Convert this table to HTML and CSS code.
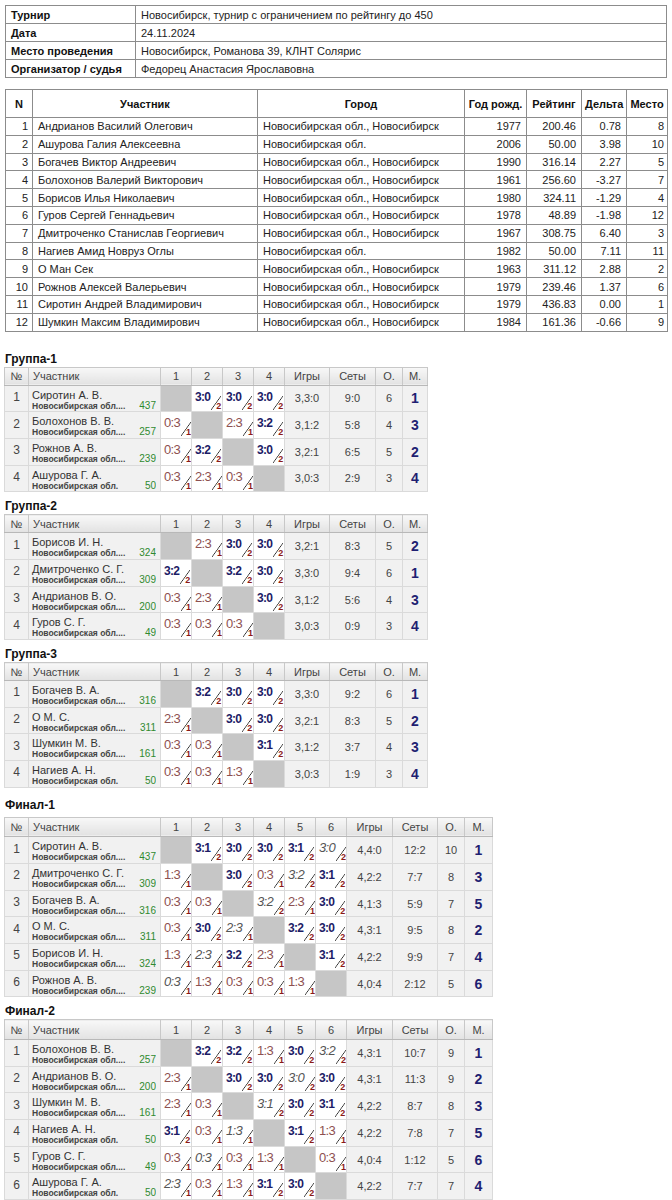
FILE: index.html
```html
<!DOCTYPE html>
<html lang="ru">
<head>
<meta charset="utf-8">
<title>Турнир</title>
<link rel="stylesheet" href="styles.css">
</head>
<body>
<table class="info">
  <colgroup><col class="i-lab"><col></colgroup>
  <tr><td class="lab">Турнир</td><td>Новосибирск, турнир с ограничением по рейтингу до 450</td></tr>
  <tr><td class="lab">Дата</td><td>24.11.2024</td></tr>
  <tr><td class="lab">Место проведения</td><td>Новосибирск, Романова 39, КЛНТ Солярис</td></tr>
  <tr><td class="lab">Организатор / судья</td><td>Федорец Анастасия Ярославовна</td></tr>
</table>

<table class="list">
  <colgroup><col class="l-n"><col class="l-name"><col class="l-city"><col class="l-year"><col class="l-rt"><col class="l-d"><col class="l-pl"></colgroup>
  <thead>
    <tr><th>N</th><th>Участник</th><th>Город</th><th>Год рожд.</th><th>Рейтинг</th><th>Дельта</th><th>Место</th></tr>
  </thead>
  <tbody>
    <tr><td class="r">1</td><td>Андрианов Василий Олегович</td><td>Новосибирская обл., Новосибирск</td><td class="r">1977</td><td class="r">200.46</td><td class="r">0.78</td><td class="r">8</td></tr>
    <tr><td class="r">2</td><td>Ашурова Галия Алексеевна</td><td>Новосибирская обл.</td><td class="r">2006</td><td class="r">50.00</td><td class="r">3.98</td><td class="r">10</td></tr>
    <tr><td class="r">3</td><td>Богачев Виктор Андреевич</td><td>Новосибирская обл., Новосибирск</td><td class="r">1990</td><td class="r">316.14</td><td class="r">2.27</td><td class="r">5</td></tr>
    <tr><td class="r">4</td><td>Болохонов Валерий Викторович</td><td>Новосибирская обл., Новосибирск</td><td class="r">1961</td><td class="r">256.60</td><td class="r">-3.27</td><td class="r">7</td></tr>
    <tr><td class="r">5</td><td>Борисов Илья Николаевич</td><td>Новосибирская обл., Новосибирск</td><td class="r">1980</td><td class="r">324.11</td><td class="r">-1.29</td><td class="r">4</td></tr>
    <tr><td class="r">6</td><td>Гуров Сергей Геннадьевич</td><td>Новосибирская обл., Новосибирск</td><td class="r">1978</td><td class="r">48.89</td><td class="r">-1.98</td><td class="r">12</td></tr>
    <tr><td class="r">7</td><td>Дмитроченко Станислав Георгиевич</td><td>Новосибирская обл., Новосибирск</td><td class="r">1967</td><td class="r">308.75</td><td class="r">6.40</td><td class="r">3</td></tr>
    <tr><td class="r">8</td><td>Нагиев Амид Новруз Оглы</td><td>Новосибирская обл.</td><td class="r">1982</td><td class="r">50.00</td><td class="r">7.11</td><td class="r">11</td></tr>
    <tr><td class="r">9</td><td>О Ман Сек</td><td>Новосибирская обл., Новосибирск</td><td class="r">1963</td><td class="r">311.12</td><td class="r">2.88</td><td class="r">2</td></tr>
    <tr><td class="r">10</td><td>Рожнов Алексей Валерьевич</td><td>Новосибирская обл., Новосибирск</td><td class="r">1979</td><td class="r">239.46</td><td class="r">1.37</td><td class="r">6</td></tr>
    <tr><td class="r">11</td><td>Сиротин Андрей Владимирович</td><td>Новосибирская обл., Новосибирск</td><td class="r">1979</td><td class="r">436.83</td><td class="r">0.00</td><td class="r">1</td></tr>
    <tr><td class="r">12</td><td>Шумкин Максим Владимирович</td><td>Новосибирская обл., Новосибирск</td><td class="r">1984</td><td class="r">161.36</td><td class="r">-0.66</td><td class="r">9</td></tr>
  </tbody>
</table>

<div class="ttl first">Группа-1</div>
<table class="rr grp">
  <colgroup><col class="w-no"><col class="w-nm"><col class="w-g"><col class="w-g"><col class="w-g"><col class="w-g"><col class="w-gm"><col class="w-st"><col class="w-o"><col class="w-m"></colgroup>
  <thead><tr><th>№</th><th class="hn">Участник</th><th>1</th><th>2</th><th>3</th><th>4</th><th>Игры</th><th>Сеты</th><th>О.</th><th>М.</th></tr></thead>
  <tbody>
    <tr><td class="no">1</td><td class="nm"><div class="n">Сиротин А. В.</div><div class="rg"><span>Новосибирская обл....</span><span class="rt">437</span></div></td>
      <td class="x"></td>
      <td class="g"><div class="sc w"><span class="s">3:0</span><span class="p">2</span></div></td>
      <td class="g"><div class="sc w"><span class="s">3:0</span><span class="p">2</span></div></td>
      <td class="g"><div class="sc w"><span class="s">3:0</span><span class="p">2</span></div></td>
      <td class="st">3,3:0</td><td class="st">9:0</td><td class="st">6</td><td class="m">1</td></tr>
    <tr><td class="no">2</td><td class="nm"><div class="n">Болохонов В. В.</div><div class="rg"><span>Новосибирская обл....</span><span class="rt">257</span></div></td>
      <td class="g"><div class="sc l"><span class="s">0:3</span><span class="p">1</span></div></td>
      <td class="x"></td>
      <td class="g"><div class="sc l"><span class="s">2:3</span><span class="p">1</span></div></td>
      <td class="g"><div class="sc w"><span class="s">3:2</span><span class="p">2</span></div></td>
      <td class="st">3,1:2</td><td class="st">5:8</td><td class="st">4</td><td class="m">3</td></tr>
    <tr><td class="no">3</td><td class="nm"><div class="n">Рожнов А. В.</div><div class="rg"><span>Новосибирская обл....</span><span class="rt">239</span></div></td>
      <td class="g"><div class="sc l"><span class="s">0:3</span><span class="p">1</span></div></td>
      <td class="g"><div class="sc w"><span class="s">3:2</span><span class="p">2</span></div></td>
      <td class="x"></td>
      <td class="g"><div class="sc w"><span class="s">3:0</span><span class="p">2</span></div></td>
      <td class="st">3,2:1</td><td class="st">6:5</td><td class="st">5</td><td class="m">2</td></tr>
    <tr><td class="no">4</td><td class="nm"><div class="n">Ашурова Г. А.</div><div class="rg"><span>Новосибирская обл.</span><span class="rt">50</span></div></td>
      <td class="g"><div class="sc l"><span class="s">0:3</span><span class="p">1</span></div></td>
      <td class="g"><div class="sc l"><span class="s">2:3</span><span class="p">1</span></div></td>
      <td class="g"><div class="sc l"><span class="s">0:3</span><span class="p">1</span></div></td>
      <td class="x"></td>
      <td class="st">3,0:3</td><td class="st">2:9</td><td class="st">3</td><td class="m">4</td></tr>
  </tbody>
</table>

<div class="ttl">Группа-2</div>
<table class="rr grp">
  <colgroup><col class="w-no"><col class="w-nm"><col class="w-g"><col class="w-g"><col class="w-g"><col class="w-g"><col class="w-gm"><col class="w-st"><col class="w-o"><col class="w-m"></colgroup>
  <thead><tr><th>№</th><th class="hn">Участник</th><th>1</th><th>2</th><th>3</th><th>4</th><th>Игры</th><th>Сеты</th><th>О.</th><th>М.</th></tr></thead>
  <tbody>
    <tr><td class="no">1</td><td class="nm"><div class="n">Борисов И. Н.</div><div class="rg"><span>Новосибирская обл....</span><span class="rt">324</span></div></td>
      <td class="x"></td>
      <td class="g"><div class="sc l"><span class="s">2:3</span><span class="p">1</span></div></td>
      <td class="g"><div class="sc w"><span class="s">3:0</span><span class="p">2</span></div></td>
      <td class="g"><div class="sc w"><span class="s">3:0</span><span class="p">2</span></div></td>
      <td class="st">3,2:1</td><td class="st">8:3</td><td class="st">5</td><td class="m">2</td></tr>
    <tr><td class="no">2</td><td class="nm"><div class="n">Дмитроченко С. Г.</div><div class="rg"><span>Новосибирская обл....</span><span class="rt">309</span></div></td>
      <td class="g"><div class="sc w"><span class="s">3:2</span><span class="p">2</span></div></td>
      <td class="x"></td>
      <td class="g"><div class="sc w"><span class="s">3:2</span><span class="p">2</span></div></td>
      <td class="g"><div class="sc w"><span class="s">3:0</span><span class="p">2</span></div></td>
      <td class="st">3,3:0</td><td class="st">9:4</td><td class="st">6</td><td class="m">1</td></tr>
    <tr><td class="no">3</td><td class="nm"><div class="n">Андрианов В. О.</div><div class="rg"><span>Новосибирская обл....</span><span class="rt">200</span></div></td>
      <td class="g"><div class="sc l"><span class="s">0:3</span><span class="p">1</span></div></td>
      <td class="g"><div class="sc l"><span class="s">2:3</span><span class="p">1</span></div></td>
      <td class="x"></td>
      <td class="g"><div class="sc w"><span class="s">3:0</span><span class="p">2</span></div></td>
      <td class="st">3,1:2</td><td class="st">5:6</td><td class="st">4</td><td class="m">3</td></tr>
    <tr><td class="no">4</td><td class="nm"><div class="n">Гуров С. Г.</div><div class="rg"><span>Новосибирская обл....</span><span class="rt">49</span></div></td>
      <td class="g"><div class="sc l"><span class="s">0:3</span><span class="p">1</span></div></td>
      <td class="g"><div class="sc l"><span class="s">0:3</span><span class="p">1</span></div></td>
      <td class="g"><div class="sc l"><span class="s">0:3</span><span class="p">1</span></div></td>
      <td class="x"></td>
      <td class="st">3,0:3</td><td class="st">0:9</td><td class="st">3</td><td class="m">4</td></tr>
  </tbody>
</table>

<div class="ttl">Группа-3</div>
<table class="rr grp">
  <colgroup><col class="w-no"><col class="w-nm"><col class="w-g"><col class="w-g"><col class="w-g"><col class="w-g"><col class="w-gm"><col class="w-st"><col class="w-o"><col class="w-m"></colgroup>
  <thead><tr><th>№</th><th class="hn">Участник</th><th>1</th><th>2</th><th>3</th><th>4</th><th>Игры</th><th>Сеты</th><th>О.</th><th>М.</th></tr></thead>
  <tbody>
    <tr><td class="no">1</td><td class="nm"><div class="n">Богачев В. А.</div><div class="rg"><span>Новосибирская обл....</span><span class="rt">316</span></div></td>
      <td class="x"></td>
      <td class="g"><div class="sc w"><span class="s">3:2</span><span class="p">2</span></div></td>
      <td class="g"><div class="sc w"><span class="s">3:0</span><span class="p">2</span></div></td>
      <td class="g"><div class="sc w"><span class="s">3:0</span><span class="p">2</span></div></td>
      <td class="st">3,3:0</td><td class="st">9:2</td><td class="st">6</td><td class="m">1</td></tr>
    <tr><td class="no">2</td><td class="nm"><div class="n">О М. С.</div><div class="rg"><span>Новосибирская обл....</span><span class="rt">311</span></div></td>
      <td class="g"><div class="sc l"><span class="s">2:3</span><span class="p">1</span></div></td>
      <td class="x"></td>
      <td class="g"><div class="sc w"><span class="s">3:0</span><span class="p">2</span></div></td>
      <td class="g"><div class="sc w"><span class="s">3:0</span><span class="p">2</span></div></td>
      <td class="st">3,2:1</td><td class="st">8:3</td><td class="st">5</td><td class="m">2</td></tr>
    <tr><td class="no">3</td><td class="nm"><div class="n">Шумкин М. В.</div><div class="rg"><span>Новосибирская обл....</span><span class="rt">161</span></div></td>
      <td class="g"><div class="sc l"><span class="s">0:3</span><span class="p">1</span></div></td>
      <td class="g"><div class="sc l"><span class="s">0:3</span><span class="p">1</span></div></td>
      <td class="x"></td>
      <td class="g"><div class="sc w"><span class="s">3:1</span><span class="p">2</span></div></td>
      <td class="st">3,1:2</td><td class="st">3:7</td><td class="st">4</td><td class="m">3</td></tr>
    <tr><td class="no">4</td><td class="nm"><div class="n">Нагиев А. Н.</div><div class="rg"><span>Новосибирская обл.</span><span class="rt">50</span></div></td>
      <td class="g"><div class="sc l"><span class="s">0:3</span><span class="p">1</span></div></td>
      <td class="g"><div class="sc l"><span class="s">0:3</span><span class="p">1</span></div></td>
      <td class="g"><div class="sc l"><span class="s">1:3</span><span class="p">1</span></div></td>
      <td class="x"></td>
      <td class="st">3,0:3</td><td class="st">1:9</td><td class="st">3</td><td class="m">4</td></tr>
  </tbody>
</table>

<div class="ttl fin-first">Финал-1</div>
<table class="rr fin">
  <colgroup><col class="w-no"><col class="w-nm"><col class="w-g"><col class="w-g"><col class="w-g"><col class="w-g"><col class="w-g"><col class="w-g"><col class="w-gm"><col class="w-st"><col class="w-o"><col class="w-m"></colgroup>
  <thead><tr><th>№</th><th class="hn">Участник</th><th>1</th><th>2</th><th>3</th><th>4</th><th>5</th><th>6</th><th>Игры</th><th>Сеты</th><th>О.</th><th>М.</th></tr></thead>
  <tbody>
    <tr><td class="no">1</td><td class="nm"><div class="n">Сиротин А. В.</div><div class="rg"><span>Новосибирская обл....</span><span class="rt">437</span></div></td>
      <td class="x"></td>
      <td class="g"><div class="sc w"><span class="s">3:1</span><span class="p">2</span></div></td>
      <td class="g"><div class="sc w"><span class="s">3:0</span><span class="p">2</span></div></td>
      <td class="g"><div class="sc w"><span class="s">3:0</span><span class="p">2</span></div></td>
      <td class="g"><div class="sc w"><span class="s">3:1</span><span class="p">2</span></div></td>
      <td class="g"><div class="sc w c"><span class="s">3:0</span><span class="p">2</span></div></td>
      <td class="st">4,4:0</td><td class="st">12:2</td><td class="st">10</td><td class="m">1</td></tr>
    <tr><td class="no">2</td><td class="nm"><div class="n">Дмитроченко С. Г.</div><div class="rg"><span>Новосибирская обл....</span><span class="rt">309</span></div></td>
      <td class="g"><div class="sc l"><span class="s">1:3</span><span class="p">1</span></div></td>
      <td class="x"></td>
      <td class="g"><div class="sc w"><span class="s">3:0</span><span class="p">2</span></div></td>
      <td class="g"><div class="sc l"><span class="s">0:3</span><span class="p">1</span></div></td>
      <td class="g"><div class="sc w c"><span class="s">3:2</span><span class="p">2</span></div></td>
      <td class="g"><div class="sc w"><span class="s">3:1</span><span class="p">2</span></div></td>
      <td class="st">4,2:2</td><td class="st">7:7</td><td class="st">8</td><td class="m">3</td></tr>
    <tr><td class="no">3</td><td class="nm"><div class="n">Богачев В. А.</div><div class="rg"><span>Новосибирская обл....</span><span class="rt">316</span></div></td>
      <td class="g"><div class="sc l"><span class="s">0:3</span><span class="p">1</span></div></td>
      <td class="g"><div class="sc l"><span class="s">0:3</span><span class="p">1</span></div></td>
      <td class="x"></td>
      <td class="g"><div class="sc w c"><span class="s">3:2</span><span class="p">2</span></div></td>
      <td class="g"><div class="sc l"><span class="s">2:3</span><span class="p">1</span></div></td>
      <td class="g"><div class="sc w"><span class="s">3:0</span><span class="p">2</span></div></td>
      <td class="st">4,1:3</td><td class="st">5:9</td><td class="st">7</td><td class="m">5</td></tr>
    <tr><td class="no">4</td><td class="nm"><div class="n">О М. С.</div><div class="rg"><span>Новосибирская обл....</span><span class="rt">311</span></div></td>
      <td class="g"><div class="sc l"><span class="s">0:3</span><span class="p">1</span></div></td>
      <td class="g"><div class="sc w"><span class="s">3:0</span><span class="p">2</span></div></td>
      <td class="g"><div class="sc l c"><span class="s">2:3</span><span class="p">1</span></div></td>
      <td class="x"></td>
      <td class="g"><div class="sc w"><span class="s">3:2</span><span class="p">2</span></div></td>
      <td class="g"><div class="sc w"><span class="s">3:0</span><span class="p">2</span></div></td>
      <td class="st">4,3:1</td><td class="st">9:5</td><td class="st">8</td><td class="m">2</td></tr>
    <tr><td class="no">5</td><td class="nm"><div class="n">Борисов И. Н.</div><div class="rg"><span>Новосибирская обл....</span><span class="rt">324</span></div></td>
      <td class="g"><div class="sc l"><span class="s">1:3</span><span class="p">1</span></div></td>
      <td class="g"><div class="sc l c"><span class="s">2:3</span><span class="p">1</span></div></td>
      <td class="g"><div class="sc w"><span class="s">3:2</span><span class="p">2</span></div></td>
      <td class="g"><div class="sc l"><span class="s">2:3</span><span class="p">1</span></div></td>
      <td class="x"></td>
      <td class="g"><div class="sc w"><span class="s">3:1</span><span class="p">2</span></div></td>
      <td class="st">4,2:2</td><td class="st">9:9</td><td class="st">7</td><td class="m">4</td></tr>
    <tr><td class="no">6</td><td class="nm"><div class="n">Рожнов А. В.</div><div class="rg"><span>Новосибирская обл....</span><span class="rt">239</span></div></td>
      <td class="g"><div class="sc l c"><span class="s">0:3</span><span class="p">1</span></div></td>
      <td class="g"><div class="sc l"><span class="s">1:3</span><span class="p">1</span></div></td>
      <td class="g"><div class="sc l"><span class="s">0:3</span><span class="p">1</span></div></td>
      <td class="g"><div class="sc l"><span class="s">0:3</span><span class="p">1</span></div></td>
      <td class="g"><div class="sc l"><span class="s">1:3</span><span class="p">1</span></div></td>
      <td class="x"></td>
      <td class="st">4,0:4</td><td class="st">2:12</td><td class="st">5</td><td class="m">6</td></tr>
  </tbody>
</table>

<div class="ttl">Финал-2</div>
<table class="rr fin">
  <colgroup><col class="w-no"><col class="w-nm"><col class="w-g"><col class="w-g"><col class="w-g"><col class="w-g"><col class="w-g"><col class="w-g"><col class="w-gm"><col class="w-st"><col class="w-o"><col class="w-m"></colgroup>
  <thead><tr><th>№</th><th class="hn">Участник</th><th>1</th><th>2</th><th>3</th><th>4</th><th>5</th><th>6</th><th>Игры</th><th>Сеты</th><th>О.</th><th>М.</th></tr></thead>
  <tbody>
    <tr><td class="no">1</td><td class="nm"><div class="n">Болохонов В. В.</div><div class="rg"><span>Новосибирская обл....</span><span class="rt">257</span></div></td>
      <td class="x"></td>
      <td class="g"><div class="sc w"><span class="s">3:2</span><span class="p">2</span></div></td>
      <td class="g"><div class="sc w"><span class="s">3:2</span><span class="p">2</span></div></td>
      <td class="g"><div class="sc l"><span class="s">1:3</span><span class="p">1</span></div></td>
      <td class="g"><div class="sc w"><span class="s">3:0</span><span class="p">2</span></div></td>
      <td class="g"><div class="sc w c"><span class="s">3:2</span><span class="p">2</span></div></td>
      <td class="st">4,3:1</td><td class="st">10:7</td><td class="st">9</td><td class="m">1</td></tr>
    <tr><td class="no">2</td><td class="nm"><div class="n">Андрианов В. О.</div><div class="rg"><span>Новосибирская обл....</span><span class="rt">200</span></div></td>
      <td class="g"><div class="sc l"><span class="s">2:3</span><span class="p">1</span></div></td>
      <td class="x"></td>
      <td class="g"><div class="sc w"><span class="s">3:0</span><span class="p">2</span></div></td>
      <td class="g"><div class="sc w"><span class="s">3:0</span><span class="p">2</span></div></td>
      <td class="g"><div class="sc w c"><span class="s">3:0</span><span class="p">2</span></div></td>
      <td class="g"><div class="sc w"><span class="s">3:0</span><span class="p">2</span></div></td>
      <td class="st">4,3:1</td><td class="st">11:3</td><td class="st">9</td><td class="m">2</td></tr>
    <tr><td class="no">3</td><td class="nm"><div class="n">Шумкин М. В.</div><div class="rg"><span>Новосибирская обл....</span><span class="rt">161</span></div></td>
      <td class="g"><div class="sc l"><span class="s">2:3</span><span class="p">1</span></div></td>
      <td class="g"><div class="sc l"><span class="s">0:3</span><span class="p">1</span></div></td>
      <td class="x"></td>
      <td class="g"><div class="sc w c"><span class="s">3:1</span><span class="p">2</span></div></td>
      <td class="g"><div class="sc w"><span class="s">3:0</span><span class="p">2</span></div></td>
      <td class="g"><div class="sc w"><span class="s">3:1</span><span class="p">2</span></div></td>
      <td class="st">4,2:2</td><td class="st">8:7</td><td class="st">8</td><td class="m">3</td></tr>
    <tr><td class="no">4</td><td class="nm"><div class="n">Нагиев А. Н.</div><div class="rg"><span>Новосибирская обл.</span><span class="rt">50</span></div></td>
      <td class="g"><div class="sc w"><span class="s">3:1</span><span class="p">2</span></div></td>
      <td class="g"><div class="sc l"><span class="s">0:3</span><span class="p">1</span></div></td>
      <td class="g"><div class="sc l c"><span class="s">1:3</span><span class="p">1</span></div></td>
      <td class="x"></td>
      <td class="g"><div class="sc w"><span class="s">3:1</span><span class="p">2</span></div></td>
      <td class="g"><div class="sc l"><span class="s">1:3</span><span class="p">1</span></div></td>
      <td class="st">4,2:2</td><td class="st">7:8</td><td class="st">7</td><td class="m">5</td></tr>
    <tr><td class="no">5</td><td class="nm"><div class="n">Гуров С. Г.</div><div class="rg"><span>Новосибирская обл....</span><span class="rt">49</span></div></td>
      <td class="g"><div class="sc l"><span class="s">0:3</span><span class="p">1</span></div></td>
      <td class="g"><div class="sc l c"><span class="s">0:3</span><span class="p">1</span></div></td>
      <td class="g"><div class="sc l"><span class="s">0:3</span><span class="p">1</span></div></td>
      <td class="g"><div class="sc l"><span class="s">1:3</span><span class="p">1</span></div></td>
      <td class="x"></td>
      <td class="g"><div class="sc l"><span class="s">0:3</span><span class="p">1</span></div></td>
      <td class="st">4,0:4</td><td class="st">1:12</td><td class="st">5</td><td class="m">6</td></tr>
    <tr><td class="no">6</td><td class="nm"><div class="n">Ашурова Г. А.</div><div class="rg"><span>Новосибирская обл.</span><span class="rt">50</span></div></td>
      <td class="g"><div class="sc l c"><span class="s">2:3</span><span class="p">1</span></div></td>
      <td class="g"><div class="sc l"><span class="s">0:3</span><span class="p">1</span></div></td>
      <td class="g"><div class="sc l"><span class="s">1:3</span><span class="p">1</span></div></td>
      <td class="g"><div class="sc w"><span class="s">3:1</span><span class="p">2</span></div></td>
      <td class="g"><div class="sc w"><span class="s">3:0</span><span class="p">2</span></div></td>
      <td class="x"></td>
      <td class="st">4,2:2</td><td class="st">7:7</td><td class="st">7</td><td class="m">4</td></tr>
  </tbody>
</table>
</body>
</html>
```
FILE: styles.css
```css
* { box-sizing: border-box; }

body {
  margin: 0;
  padding: 5px 5px 0 4px;
  font-family: "Liberation Sans", Arial, sans-serif;
  color: #222;
  background: #fff;
}

/* ---------- info + participant list ---------- */
.info, .list {
  border-collapse: collapse;
  table-layout: fixed;
  width: 662px;
  margin-left: 1px;
  font-size: 11px;
  border: 1px solid #6e6e6e;
}
.info td, .list td, .list th {
  border: 1px solid #8c8c8c;
  padding: 0 5px;
  white-space: nowrap;
  overflow: hidden;
}
.info td { height: 18px; }
.info .lab { font-weight: bold; color: #111; }
.i-lab { width: 130px; }

.list { margin-top: 11px; }
.list th { height: 28px; font-weight: bold; color: #111; text-align: center; padding: 0 3px; }
.list td { height: 17.8px; }
.list td.r { text-align: right; }
.l-n { width: 27px; }
.l-name { width: 225px; }
.l-city { width: 207px; }
.l-year { width: 62px; }
.l-rt { width: 55px; }
.l-d { width: 45px; }
.l-pl { width: 41px; }
.list td:first-child { padding-right: 4px; }
.list td:last-child { padding-right: 3px; }

/* ---------- section titles ---------- */
.ttl {
  font-weight: bold;
  font-size: 12px;
  line-height: 14px;
  color: #111;
  margin: 7px 0 1px 1px;
}
.ttl.first { margin-top: 20px; }
.ttl.fin-first { margin-top: 10px; margin-bottom: 5px; }

/* ---------- round-robin tables ---------- */
.rr {
  border-collapse: collapse;
  table-layout: fixed;
  font-size: 11px;
  color: #444;
  border: 1px solid #c4c4c4;
}
.grp { width: 423px; }
.fin { width: 488px; }

.w-no { width: 24px; }
.w-nm { width: 132px; }
.w-g { width: 31px; }
.w-gm { width: 45px; }
.w-st { width: 46px; }
.w-o { width: 27px; }
.w-m { width: 25px; }
.fin .w-gm { width: 46px; }
.fin .w-st { width: 45px; }
.fin .w-m { width: 28px; }

.rr th {
  height: 18px;
  padding: 0;
  font-weight: normal;
  color: #444;
  text-align: center;
  background: linear-gradient(#f8f8f8, #e2e2e2);
  border: 1px solid #c8c8c8;
  border-bottom-color: #b8b8b8;
}
.fin th { height: 19.5px; }
.rr th.hn { text-align: left; padding-left: 4px; }

.rr td {
  height: 26.7px;
  padding: 0;
  border: 1px solid #dadada;
  background: #f1f1f1;
  vertical-align: middle;
  overflow: hidden;
  line-height: 14px;
}
.rr td.no { text-align: center; font-size: 12px; color: #444; padding-bottom: 3px; }
.rr td.nm { vertical-align: top; padding: 0 4px 0 3px; }
.n { font-size: 11px; line-height: 12px; height: 12px; margin-top: 3px; color: #333; white-space: nowrap; }
.rg {
  display: flex;
  justify-content: space-between;
  align-items: baseline;
  height: 10px;
  line-height: 10px;
  margin-top: 0;
  white-space: nowrap;
  overflow: hidden;
}
.rg span:first-child { font-size: 8.5px; font-weight: bold; color: #444; }
.rt { font-size: 10px; color: #2f8a2f; }

.rr td.st { text-align: center; font-size: 11px; color: #444; }
.rr td.m { text-align: center; font-size: 14px; font-weight: bold; color: #1f1f72; }

.rr td.x { background: #c6c6c6; }
.rr td.g { background: #fff; vertical-align: top; }

.sc {
  display: flex;
  height: 24px;
  padding-left: 3px;
}
.sc .s {
  margin-top: 4px;
  line-height: 14px;
  height: 14px;
  letter-spacing: -0.7px;
  white-space: nowrap;
}
.sc.w .s { font-size: 12px; font-weight: bold; color: #1c1c66; }
.sc.l .s { font-size: 13px; color: #8d5050; }
.sc.c .s { font-style: italic; font-weight: normal; font-size: 13px; color: #555; }

.sc .p {
  width: 10px;
  height: 14px;
  margin-top: 10px;
  margin-left: 1px;
  display: flex;
  align-items: flex-end;
  justify-content: flex-end;
  font-size: 9px;
  line-height: 8px;
  font-weight: bold;
  color: #8b1a1a;
  background: linear-gradient(to bottom right, transparent calc(50% - 0.7px), #333 50%, transparent calc(50% + 0.7px));
}
```
